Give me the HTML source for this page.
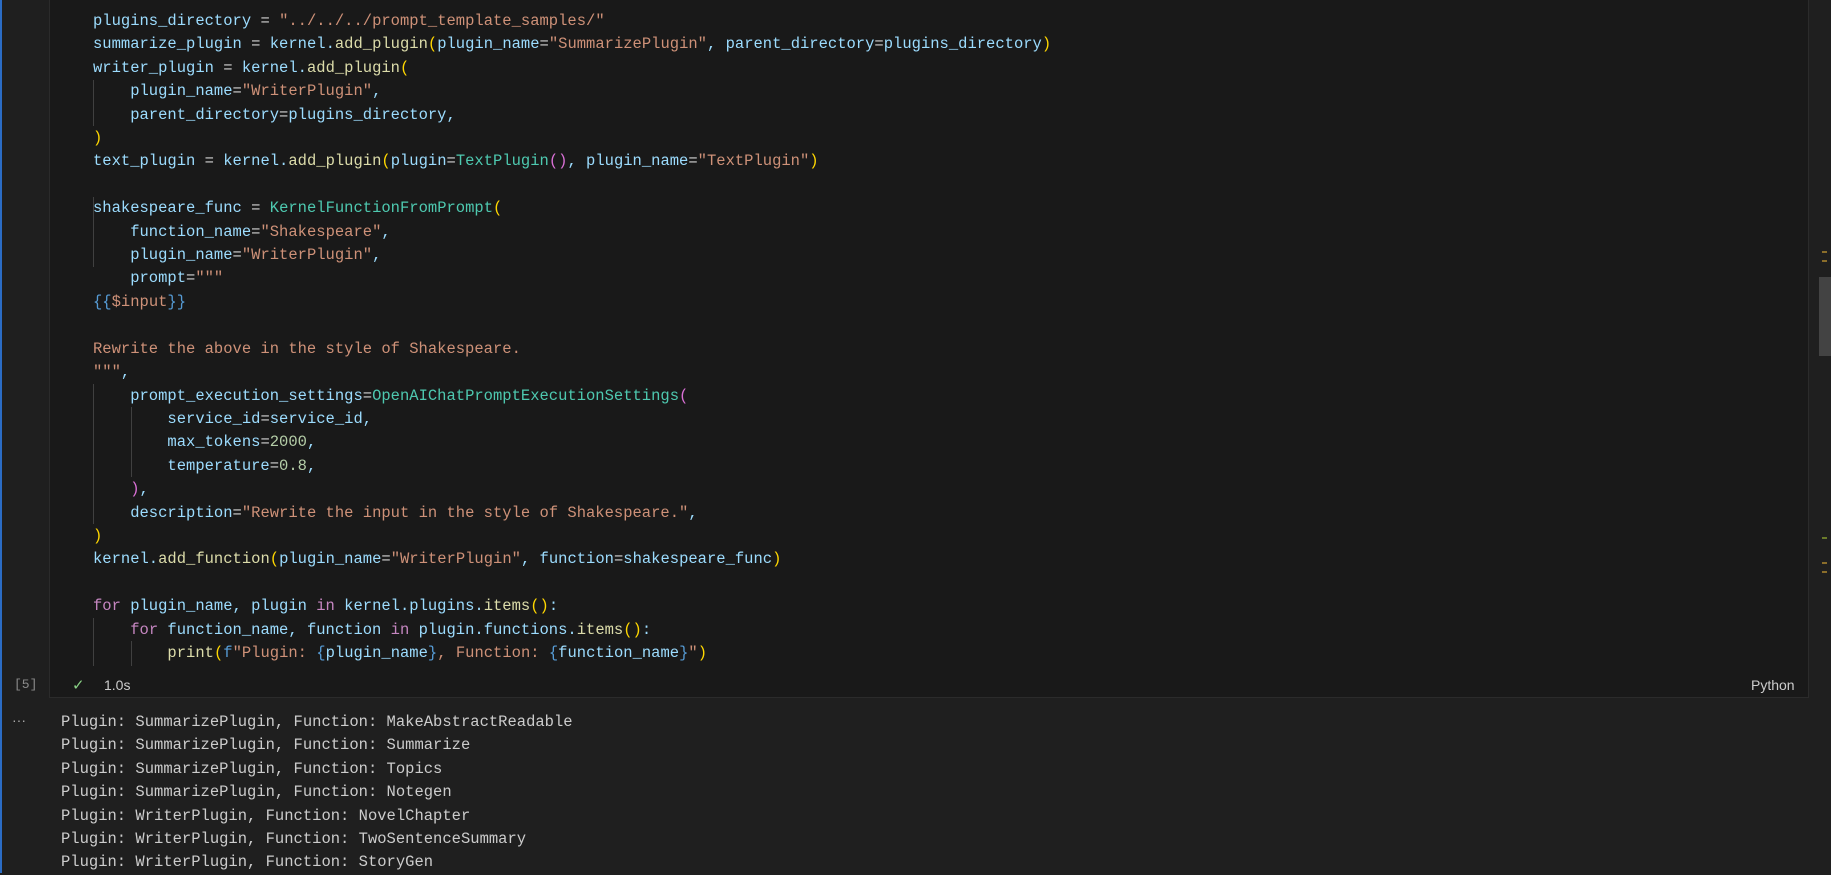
<!DOCTYPE html>
<html><head><meta charset="utf-8"><style>
html,body{margin:0;padding:0;width:1831px;height:873px;overflow:hidden;background:#1f1f1f;}
.cell{position:absolute;left:49px;top:-2px;width:1760px;height:700px;background:#191919;border:1px solid #2b2b2b;box-sizing:border-box;}
.blue{position:absolute;left:0;top:0;width:2px;height:873px;background:#2b6cc4;}
pre{margin:0;position:absolute;font-family:"Liberation Mono",monospace;font-size:15.5px;line-height:23.4px;color:#9cdcfe;white-space:pre;}
.code{left:93px;top:10px;}
.out{left:61px;top:711px;color:#cccccc;}
.f{color:#dcdcaa}.s{color:#ce9178}.c{color:#4ec9b0}.k{color:#c586c0}.y{color:#ffd700}.p{color:#da70d6}.b{color:#179fff}.n{color:#b5cea8}.o{color:#d4d4d4}.bl{color:#569cd6}
.g{position:absolute;width:1px;background:#404040;}
.st{position:absolute;font-family:"Liberation Sans",sans-serif;font-size:14px;color:#cccccc;}
</style></head><body>
<div class="blue"></div>
<div class="cell"></div>
<div class="g" style="left:93px;top:80px;height:46px"></div>
<div class="g" style="left:93px;top:197px;height:70px"></div>
<div class="g" style="left:93px;top:384px;height:140px"></div>
<div class="g" style="left:131px;top:407px;height:70px"></div>
<div class="g" style="left:93px;top:618px;height:48px"></div>
<div class="g" style="left:131px;top:641px;height:25px"></div>
<pre class="code">plugins_directory <span class="o">=</span> <span class="s">"../../../prompt_template_samples/"</span>
summarize_plugin <span class="o">=</span> kernel.<span class="f">add_plugin</span><span class="y">(</span>plugin_name<span class="o">=</span><span class="s">"SummarizePlugin"</span>, parent_directory<span class="o">=</span>plugins_directory<span class="y">)</span>
writer_plugin <span class="o">=</span> kernel.<span class="f">add_plugin</span><span class="y">(</span>
    plugin_name<span class="o">=</span><span class="s">"WriterPlugin"</span>,
    parent_directory<span class="o">=</span>plugins_directory,
<span class="y">)</span>
text_plugin <span class="o">=</span> kernel.<span class="f">add_plugin</span><span class="y">(</span>plugin<span class="o">=</span><span class="c">TextPlugin</span><span class="p">()</span>, plugin_name<span class="o">=</span><span class="s">"TextPlugin"</span><span class="y">)</span>

shakespeare_func <span class="o">=</span> <span class="c">KernelFunctionFromPrompt</span><span class="y">(</span>
    function_name<span class="o">=</span><span class="s">"Shakespeare"</span>,
    plugin_name<span class="o">=</span><span class="s">"WriterPlugin"</span>,
    prompt<span class="o">=</span><span class="s">"""</span>
<span class="bl">{{</span><span class="s">$input</span><span class="bl">}}</span>

<span class="s">Rewrite the above in the style of Shakespeare.</span>
<span class="s">"""</span>,
    prompt_execution_settings<span class="o">=</span><span class="c">OpenAIChatPromptExecutionSettings</span><span class="p">(</span>
        service_id<span class="o">=</span>service_id,
        max_tokens<span class="o">=</span><span class="n">2000</span>,
        temperature<span class="o">=</span><span class="n">0.8</span>,
    <span class="p">)</span>,
    description<span class="o">=</span><span class="s">"Rewrite the input in the style of Shakespeare."</span>,
<span class="y">)</span>
kernel.<span class="f">add_function</span><span class="y">(</span>plugin_name<span class="o">=</span><span class="s">"WriterPlugin"</span>, function<span class="o">=</span>shakespeare_func<span class="y">)</span>

<span class="k">for</span> plugin_name, plugin <span class="k">in</span> kernel.plugins.<span class="f">items</span><span class="y">()</span>:
    <span class="k">for</span> function_name, function <span class="k">in</span> plugin.functions.<span class="f">items</span><span class="y">()</span>:
        <span class="f">print</span><span class="y">(</span><span class="bl">f</span><span class="s">"Plugin: </span><span class="bl">{</span>plugin_name<span class="bl">}</span><span class="s">, Function: </span><span class="bl">{</span>function_name<span class="bl">}</span><span class="s">"</span><span class="y">)</span></pre>
<div class="st" style="left:14px;top:677px;color:#8a8a8a;font-family:'Liberation Mono',monospace;font-size:13px">[5]</div>
<div class="st" style="left:72px;top:676px;color:#89d185;font-size:15px">✓</div>
<div class="st" style="left:104px;top:677px">1.0s</div>
<div class="st" style="left:1751px;top:677px">Python</div>
<div class="st" style="left:12px;top:712px;color:#aaaaaa">···</div>
<div style="position:absolute;left:1819px;top:277px;width:12px;height:79px;background:#434343"></div>
<div style="position:absolute;left:1822px;top:251px;width:5px;height:2px;background:#8a6d2a"></div>
<div style="position:absolute;left:1822px;top:260px;width:5px;height:2px;background:#8a6d2a"></div>
<div style="position:absolute;left:1822px;top:537px;width:5px;height:2px;background:#6a7a2a"></div>
<div style="position:absolute;left:1822px;top:562px;width:5px;height:2px;background:#8a6d2a"></div>
<div style="position:absolute;left:1822px;top:571px;width:5px;height:2px;background:#8a6d2a"></div>
<pre class="out">Plugin: SummarizePlugin, Function: MakeAbstractReadable
Plugin: SummarizePlugin, Function: Summarize
Plugin: SummarizePlugin, Function: Topics
Plugin: SummarizePlugin, Function: Notegen
Plugin: WriterPlugin, Function: NovelChapter
Plugin: WriterPlugin, Function: TwoSentenceSummary
Plugin: WriterPlugin, Function: StoryGen</pre>
</body></html>
